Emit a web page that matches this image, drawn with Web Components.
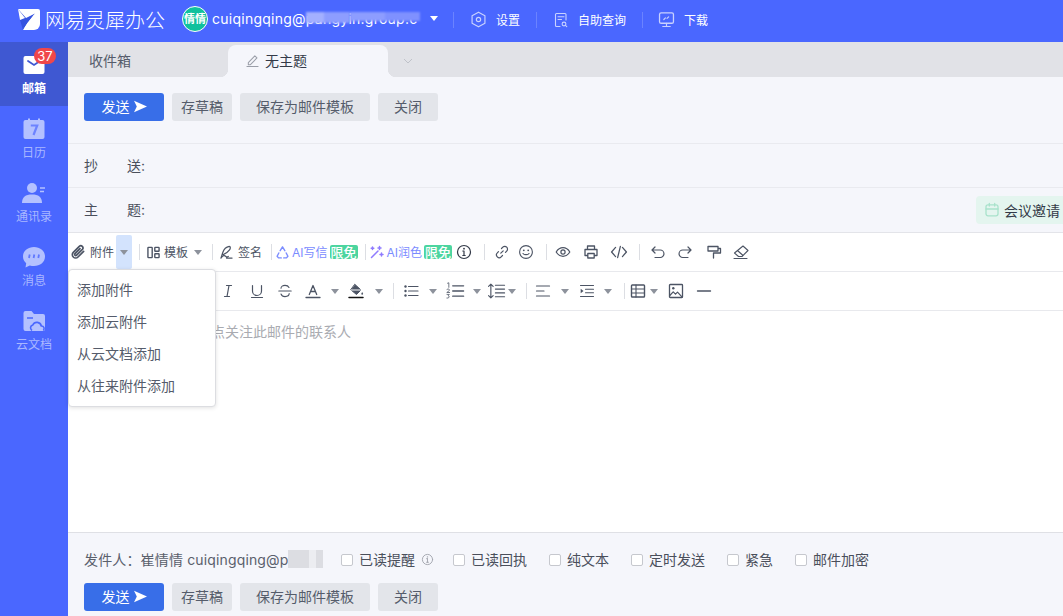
<!DOCTYPE html>
<html lang="zh">
<head>
<meta charset="utf-8">
<title>网易灵犀办公</title>
<style>
  html, body { margin: 0; height: 100%; overflow: hidden; }
  body { font-family: Inter, "Noto Sans CJK SC", sans-serif; font-size: 13px; color: #4c5464; }
</style>
</head>
<body>
<mail-app></mail-app>

<script>
// icon bodies, 16x16 box, stroke follows currentColor
const ICONS = {
  clip: '<path d="M13.6 7.4 8 13a3.3 3.3 0 0 1-4.7-4.7l6-6a2.2 2.2 0 0 1 3.1 3.1l-5.8 5.8a1.1 1.1 0 0 1-1.6-1.6l5-5" stroke-width="1.7"/>',
  layout: '<rect x="2" y="2.5" width="4.6" height="11" rx=".6" stroke-width="1.5"/><rect x="9.4" y="2.5" width="4.6" height="4.2" rx=".6" stroke-width="1.5"/><rect x="9.4" y="9.3" width="4.6" height="4.2" rx=".6" stroke-width="1.5"/>',
  sign: '<path d="M2 14 4 8c1-3 4-6 7-6.500 1.500 0 1.500 2 0 4-1.500 2-4 4-6.500 4.800M2 14c2-3 4-3 5-2s2 1 3 .2M8 14h6" stroke-width="1.300"/>',
  ai: '<path d="M8 2 5.500 6M8 2l2.500 4M4 8.500 2.200 12l1.500 1.800h3M12 8.500l1.800 3.500-1.500 1.800h-3" stroke-width="1.500"/>',
  wand: '<path d="M2.500 13.500 9 7M10.500 2.500v3M9 4h3M3.500 3v2.500M2.200 4.200h2.600M12.500 9v3M11 10.500h3" stroke-width="1.500"/>',
  info: '<circle cx="8" cy="8" r="6.500" stroke-width="1.200"/><path d="M8 7v4.500M6.800 11.500h2.400M6.800 7H8" stroke-width="1.200"/><circle cx="8" cy="4.700" r=".9" fill="currentColor" stroke="none"/>',
  link: '<path d="M6.800 9.200 9.200 6.800M7.500 4.500l1.300-1.300a2.700 2.700 0 0 1 3.900 3.900l-1.200 1.300M8.500 11.500l-1.300 1.300a2.700 2.700 0 0 1-3.900-3.900l1.200-1.300" stroke-width="1.200"/>',
  smile: '<circle cx="8" cy="8" r="6.400" stroke-width="1.100"/><path d="M5 9.500c.8 1.500 5.200 1.500 6 0" stroke-width="1.100"/><circle cx="5.800" cy="6.300" r=".9" fill="currentColor" stroke="none"/><circle cx="10.200" cy="6.300" r=".9" fill="currentColor" stroke="none"/>',
  eye: '<path d="M1.200 8C3 5 5.300 3.700 8 3.700S13 5 14.800 8C13 11 10.700 12.300 8 12.300S3 11 1.200 8Z" stroke-width="1.200"/><circle cx="8" cy="8" r="2.100" stroke-width="1.200"/>',
  print: '<path d="M4.500 5V2h7v3M4.500 11.500H2V5.500h12v6h-2.500" stroke-width="1.300"/><rect x="4.800" y="9.500" width="6.400" height="4.500" stroke-width="1.300"/>',
  code: '<path d="M5 4 1.500 8 5 12M11 4l3.500 4-3.500 4M9.200 3 6.800 13" stroke-width="1.100"/>',
  undo: '<path d="M2.500 6h7.700a3.500 3.500 0 0 1 0 7.500H5M5 3 2 6l3 3" stroke-width="1.200"/>',
  redo: '<path d="M13.500 6H5.800a3.500 3.500 0 0 0 0 7.500H11M11 3l3 3-3 3" stroke-width="1.200"/>',
  paint: '<path d="M2 2.500h10v4.500H2zM12 4.500h2.500V9H7.500v5" stroke-width="1.300"/>',
  eraser: '<path d="M10 2 15 6.500 9 12.500H5.500L1.500 9zM4.500 6.500l5 4.500M1 14.500h13" stroke-width="1.100"/>',
  italic: '<path d="M6.500 2.500h5M4.500 13.500h5M9 2.500l-2 11" stroke-width="1.200"/>',
  underline: '<path d="M3.500 2.500V8a4.500 4.500 0 0 0 9 0V2.500M2.500 14.500h11" stroke-width="1.200"/>',
  strike: '<path d="M12 4.500C11.300 3 9.800 2.400 8 2.400 5.800 2.400 4 3.400 4 5.300M4 11c.6 1.700 2.200 2.600 4 2.600 2.300 0 4.200-1 4.200-3M1.800 8h12.400" stroke-width="1.100"/>',
  fontcolor: '<path d="M4.300 11.500 8 2.500l3.700 9M5.500 8.500h5M1 14.500h14" stroke-width="1.300"/>',
  fill: '<path d="M7 1.500 13 7l-4.500 4.500L3 7z" fill="currentColor" stroke-width="1"/><path d="M3.500 7h9" stroke="#fff" stroke-width="1"/><path d="M14.200 9c.7 1 .9 1.500.9 1.800a.9.9 0 0 1-1.800 0c0-.3.200-.8.900-1.800Z" fill="currentColor" stroke="none"/><path d="M1 14.500h14" stroke="#111" stroke-width="1.500"/>',
  ul: '<path d="M5.500 3.500H15M5.500 8H15M5.500 12.500H15" stroke-width="1.200"/><circle cx="2.500" cy="3.500" r="1.200" fill="currentColor" stroke="none"/><circle cx="2.500" cy="8" r="1.200" fill="currentColor" stroke="none"/><circle cx="2.500" cy="12.500" r="1.200" fill="currentColor" stroke="none"/>',
  ol: '<path d="M6 3.500h9.500M6 8h9.500M6 12.500h9.500" stroke-width="1.200"/><path d="M1.500 1.200 2.600.8v4M.8 6.800c.3-.8 2.500-.8 2.300.5-.1.700-1.400 1.200-2.300 2h2.500M1 11h2l-1 1.200c1.300 0 1.500 2.300-1.100 2" stroke-width=".7"/>',
  lineheight: '<path d="M3.500 2v12M1.500 4l2-2 2 2M1.500 12l2 2 2-2M7.500 3h8M7.500 6.300h8M7.500 9.700h8M7.500 13h8" stroke-width="1"/>',
  align: '<path d="M1.500 3h13M1.500 8h7.500M1.500 13h13" stroke-width="1.200"/>',
  indent: '<path d="M1.500 2.500h13M6.500 6.300h8M6.500 9.700h8M1.500 13.500h13" stroke-width="1.100"/><path d="M1.700 5.800 4.500 8l-2.800 2.200z" fill="currentColor" stroke="none"/>',
  table: '<rect x="1.500" y="2" width="13" height="12" rx=".8" stroke-width="1.400"/><path d="M6 2v12M1.500 6h13M1.500 10h13" stroke-width="1.100"/>',
  image: '<rect x="1.500" y="1.500" width="13" height="13" rx=".8" stroke-width="1.300"/><circle cx="5.300" cy="5.300" r="1.200" fill="currentColor" stroke="none"/><path d="m1.800 12.500 3.400-3.700 2.300 2.400 2-2 4.700 5" stroke-width="1.200"/>',
  hr: '<path d="M1.500 8h13" stroke-width="1.400"/>',
  pencil: '<path d="M3.500 10.300 10.500 3l2.300 2.200-7 7.300H3.500zM2 14.500h12" stroke-width="1.100"/>',
  calendar: '<rect x="2" y="2.800" width="12" height="11" rx="2" stroke-width="1.300"/><path d="M2 7h12M5.300 1.500v2.500M10.700 1.500v2.500" stroke-width="1.300"/>',
  hexagon: '<path d="M8 1.200 14 4.600v6.800l-6 3.400-6-3.400V4.600z" stroke-width="1.100"/><circle cx="8" cy="8" r="2" stroke-width="1.100"/>',
  report: '<path d="M7 14.500H3.500a1 1 0 0 1-1-1v-11a1 1 0 0 1 1-1h8.500a1 1 0 0 1 1 1V8" stroke-width="1.100"/><path d="M5 4.800h6M5 7.500h3.500" stroke-width="1.100"/><circle cx="11" cy="12" r="1.900" stroke-width="1.100"/><path d="m12.400 13.400 1.400 1.300" stroke-width="1.100"/>',
  monitor: '<rect x="1.500" y="1.800" width="13" height="9.700" rx="1.500" stroke-width="1.200"/><path d="M8 11.500v3M4.500 14.500h7M5.500 8l1.500-1.500M8.500 7l1.500-1.500" stroke-width="1.100"/>'
};

class BaseElement extends HTMLElement {
  constructor() {
    super();
    this.attachShadow({ mode: 'open' });
  }
  connectedCallback() {
    const template = document.createElement('template');
    template.innerHTML = `<style>${this.getStyles()}</style>${this.getTemplate()}`;
    this.shadowRoot.appendChild(template.content.cloneNode(true));
  }
}

class MailIcon extends BaseElement {
  getStyles() {
    const size = this.getAttribute('size') || 14;
    return `:host { display: block; flex: none; width: ${size}px; height: ${size}px; }
      svg { display: block; width: 100%; height: 100%; overflow: visible; }`;
  }
  getTemplate() {
    return `<svg viewBox="1 1 14 14" fill="none" stroke="currentColor" stroke-linecap="round" stroke-linejoin="round">${ICONS[this.getAttribute('name')]}</svg>`;
  }
}

class ToolCaret extends BaseElement {
  getStyles() {
    return `:host { display: flex; flex: none; width: 10px; justify-content: center; }
      i { display: block; border: 4px solid transparent; border-top: 5px solid #8d929c; border-bottom: 0; }`;
  }
  getTemplate() { return '<i></i>'; }
}

class ToolSep extends BaseElement {
  getStyles() { return ':host { display: block; flex: none; width: 1px; height: 16px; background: #dcdee3; }'; }
  getTemplate() { return ''; }
}

class FreeTag extends BaseElement {
  getStyles() {
    return `:host { display: block; flex: none; width: 28px; height: 14px; line-height: 14px; background: #4cd59f; color: #fff; font-size: 13px; font-weight: 500; text-align: center; border-radius: 2px; overflow: hidden; }`;
  }
  getTemplate() { return '<slot></slot>'; }
}

class MailButton extends BaseElement {
  getStyles() {
    return `:host { display: flex; align-items: center; justify-content: center; height: 28px; padding-bottom: 2px; border-radius: 3px; background: #e3e5ea; color: #555c6b; font-size: 14px; box-sizing: border-box; }
      :host([primary]) { background: #386ee8; color: #fff; }
      svg { width: 13px; height: 13px; margin-left: 4px; }`;
  }
  getTemplate() {
    const arrow = this.hasAttribute('primary')
      ? '<svg viewBox="0 0 13 13"><path d="M0 .8 13 6.500 0 12.200 2.800 6.500Z" fill="#fff"/></svg>' : '';
    return `<slot></slot>${arrow}`;
  }
}

class ActionBar extends BaseElement {
  getStyles() { return ':host { display: flex; gap: 8px; }'; }
  getTemplate() {
    return `<mail-button primary style="width:80px">发送</mail-button>
      <mail-button style="width:60px">存草稿</mail-button>
      <mail-button style="width:130px">保存为邮件模板</mail-button>
      <mail-button style="width:60px">关闭</mail-button>`;
  }
}

class TopBar extends BaseElement {
  getStyles() {
    return `:host { display: flex; align-items: center; height: 42px; background: #4a67ff; color: #fff; flex: none; }
      .logo { width: 24px; height: 23px; margin: -3px 0 0 17px; flex: none; }
      .brand { margin: -3px 0 0 4px; font-size: 20px; font-weight: 300; width: 121px; white-space: nowrap; }
      .avatar { box-sizing: border-box; width: 26px; height: 26px; margin: -4px 0 0 16px; border-radius: 50%; border: 1px solid #fff; background: #10c19d; font-size: 11px; font-weight: 700; line-height: 24px; text-align: center; flex: none; white-space: nowrap; overflow: hidden; }
      .mail { position: relative; margin: -4px 0 0 4px; width: 211px; font-size: 14px; letter-spacing: .25px; white-space: nowrap; line-height: 20px; flex: none; }
      .blur { position: absolute; top: 3px; filter: blur(1px); }
      .b1 { left: 94px; width: 44px; height: 11px; background: linear-gradient(90deg, #a3b0ff 0 40%, #8d9dff 40%); }
      .b2 { left: 138px; width: 70px; height: 9px; background: linear-gradient(90deg, #8d9dff 0 50%, #7f91ff 50%); }
      .down { margin: -5px 0 0 7px; border: 4.500px solid transparent; border-top: 5px solid #fff; border-bottom: 0; flex: none; }
      .sep { width: 1px; height: 16px; margin-top: -3px; background: #6b83ff; flex: none; }
      .item { display: flex; align-items: center; margin-top: -3px; font-size: 12px; flex: none; }
      .item mail-icon { color: #c9d2ff; margin-right: 10px; }
      `;
  }
  getTemplate() {
    return `<svg class="logo" viewBox="0 0 24 23"><path d="M1 1h20a2 2 0 0 1 2 2v13a6 6 0 0 1-6 6H8z" fill="#fff"/><path d="M1 1 9 10l9-4.500L10.500 15 6 22 3 12z" fill="#3553e0"/><path d="M3 12 1 1l7 9z" fill="#fff"/><path d="M6 22l4.500-7L18 5.500 13 22z" fill="#fff"/></svg>
      <div class="brand">网易灵犀办公</div>
      <div class="avatar">情情</div>
      <div class="mail">cuiqingqing@pangyin.group.c<div class="blur b1"></div><div class="blur b2"></div></div>
      <i class="down"></i>
      <div class="sep" style="margin-left:15px"></div>
      <div class="item" style="margin-left:17px"><mail-icon name="hexagon" size="15"></mail-icon>设置</div>
      <div class="sep" style="margin-left:16px"></div>
      <div class="item" style="margin-left:17px"><mail-icon name="report" size="14"></mail-icon>自助查询</div>
      <div class="sep" style="margin-left:16px"></div>
      <div class="item" style="margin-left:16px"><mail-icon name="monitor" size="15"></mail-icon>下载</div>`;
  }
}

class NavItem extends BaseElement {
  getStyles() {
    return `:host { display: flex; flex-direction: column; align-items: center; height: 64px; box-sizing: border-box; padding-top: 12px; position: relative; color: #a9b7ff; font-size: 12px; line-height: 17px; }
      :host([active]) { background: #3f58d2; color: #fff; font-weight: 700; }
      .ico { width: 24px; height: 22px; margin-bottom: 4px; }
      ::slotted(svg) { display: block; width: 24px; height: 22px; }
      .badge { position: absolute; left: 34px; top: 6px; min-width: 22px; height: 16px; line-height: 16px; border-radius: 8px; background: #f0474a; color: #fff; font-size: 13px; font-weight: 400; text-align: center; }`;
  }
  getTemplate() {
    const badge = this.getAttribute('badge');
    return `<div class="ico"><slot name="icon"></slot></div><slot></slot>${badge ? `<div class="badge">${badge}</div>` : ''}`;
  }
}

class SideBar extends BaseElement {
  getStyles() { return ':host { display: block; width: 68px; flex: none; background: #4a67ff; }'; }
  getTemplate() {
    return `<nav-item active badge="37"><svg slot="icon" viewBox="0 0 24 22"><rect x="1.500" y="2" width="21" height="18" rx="2" fill="#fff"/><path d="M6 7l6 4 6-4" fill="none" stroke="#3f58d2" stroke-width="1.800" stroke-linecap="round"/></svg>邮箱</nav-item>
      <nav-item><svg slot="icon" viewBox="0 0 24 22"><rect x="1.500" y="2" width="21" height="19" rx="2" fill="#b4c1ff"/><path d="M7 .5v3M17 .5v3" stroke="#b4c1ff" stroke-width="2"/><path d="M8.800 7.500h6.400L11.500 17" fill="none" stroke="#6d83ff" stroke-width="2.200"/></svg>日历</nav-item>
      <nav-item><svg slot="icon" viewBox="0 0 24 22"><circle cx="10" cy="6" r="5" fill="#b4c1ff"/><path d="M0 21c0-6 3.500-8.500 10-8.500S20 15 20 21z" fill="#b4c1ff"/><path d="M18 6h5M18 9.500h4" stroke="#b4c1ff" stroke-width="1.500"/></svg>通讯录</nav-item>
      <nav-item><svg slot="icon" viewBox="0 0 24 22"><path d="M12 1c6 0 11 3.800 11 9.500S18 20 12 20c-1.500 0-3-.2-4.200-.6L3.500 21.500l.7-4.200C2.200 15.500 1 13.200 1 10.500 1 4.800 6 1 12 1Z" fill="#b4c1ff"/><path d="M7.700 8.500 7 12M12.300 8.500l-.7 3.500M17 8.500l-.7 3.500" stroke="#6078ff" stroke-width="1.800"/></svg>消息</nav-item>
      <nav-item><svg slot="icon" viewBox="0 0 24 22"><path d="M1.500 3a2 2 0 0 1 2-2h6l2.500 3h9a2 2 0 0 1 2 2v13a2 2 0 0 1-2 2h-17.500a2 2 0 0 1-2-2z" fill="#b4c1ff"/><path d="M5 8h6" stroke="#4a67ff" stroke-width="1.500"/><path d="M10 20.500a3 3 0 0 1 .8-5.500 4.500 4.500 0 0 1 8.500 1 2.600 2.600 0 0 1 2 4.500" fill="none" stroke="#4a67ff" stroke-width="1.600"/></svg>云文档</nav-item>`;
  }
}

class TabStrip extends BaseElement {
  getStyles() {
    return `:host { display: flex; align-items: flex-end; height: 35px; flex: none; background: #e1e2e7; font-size: 14px; box-sizing: border-box; }
      .tab { display: flex; align-items: center; height: 32px; box-sizing: border-box; padding-bottom: 2px; }
      .inbox { width: 160px; padding-left: 21px; color: #555c6b; }
      .active { position: relative; width: 160px; padding-left: 18px; background: #f5f6fb; border-radius: 8px 8px 0 0; color: #333a48; }
      .active::before, .active::after { content: ""; position: absolute; bottom: 0; width: 8px; height: 8px; }
      .active::before { left: -8px; background: radial-gradient(circle at 0 0, transparent 8px, #f5f6fb 8.500px); }
      .active::after { right: -8px; background: radial-gradient(circle at 100% 0, transparent 8px, #f5f6fb 8.500px); }
      .active mail-icon { color: #9a9ea8; margin-right: 6px; }
      svg { width: 10px; height: 6px; margin: 0 0 13px 15px; }`;
  }
  getTemplate() {
    return `<div class="tab inbox">收件箱</div>
      <div class="tab active"><mail-icon name="pencil" size="13"></mail-icon>无主题</div>
      <svg viewBox="0 0 10 6"><path d="M1 1l4 4 4-4" fill="none" stroke="#bfc2c9" stroke-width="1"/></svg>`;
  }
}

class FieldRow extends BaseElement {
  getStyles() {
    return `:host { display: flex; align-items: center; height: 44px; box-sizing: border-box; padding-left: 16px; border-bottom: 1px solid #e9eaef; color: #4a4f5b; font-size: 14px; }
      .label { display: flex; justify-content: space-between; width: 61px; margin-bottom: var(--lift, 2px); }
      ::slotted(*) { margin-left: auto; }`;
  }
  getTemplate() {
    const [a, b] = this.getAttribute('label');
    return `<div class="label"><span>${a}</span><span>${b}:</span></div><slot></slot>`;
  }
}

class MeetingLink extends BaseElement {
  getStyles() {
    return `:host { display: flex; align-items: center; width: 87px; height: 28px; box-sizing: border-box; padding: 0 0 1px 9px; border-radius: 4px 0 0 4px; background: #e4f5ef; color: #333a48; font-size: 14px; white-space: nowrap; overflow: hidden; }
      mail-icon { color: #a8e2cb; margin-right: 5px; }`;
  }
  getTemplate() { return '<mail-icon name="calendar" size="14"></mail-icon><slot></slot>'; }
}

class EditorToolbar extends BaseElement {
  getStyles() {
    return `:host { display: flex; align-items: center; height: 39px; box-sizing: border-box; border-bottom: 1px solid #e8e9ed; background: #fff; color: #4c5464; font-size: 12px; white-space: nowrap; }
      ::slotted(span) { margin-bottom: 2px; }
      ::slotted(.ai) { color: #7b8cff; }`;
  }
  getTemplate() { return '<slot></slot>'; }
}

class AttachCaret extends BaseElement {
  getStyles() {
    return `:host { display: flex; align-items: center; justify-content: center; width: 16px; height: 34px; flex: none; background: #d3e3fd; border-radius: 2px; }`;
  }
  getTemplate() { return '<tool-caret></tool-caret>'; }
}

class DropMenu extends BaseElement {
  getStyles() {
    return `:host { position: absolute; left: 0; top: 36px; width: 148px; box-sizing: border-box; height: 138px; padding: 4px 0; background: #fff; border: 1px solid #dcdde1; border-radius: 4px; box-shadow: 0 1px 4px rgba(0,0,0,.12); color: #555c6b; font-size: 14px; z-index: 5; }
      div { height: 32px; line-height: 32px; padding-left: 8px; }`;
  }
  getTemplate() {
    return ['添加附件', '添加云附件', '从云文档添加', '从往来附件添加'].map(t => `<div>${t}</div>`).join('');
  }
}

class CheckOption extends BaseElement {
  getStyles() {
    return `:host { display: flex; align-items: center; flex: none; color: #4a4f5b; font-size: 14px; }
      i { display: block; box-sizing: border-box; width: 12px; height: 12px; margin: 2px 6px 0 0; border: 1px solid #c6c8ce; border-radius: 2px; background: #fff; }`;
  }
  getTemplate() { return '<i></i><slot></slot>'; }
}

class SendFooter extends BaseElement {
  getStyles() {
    return `:host { display: flex; flex-direction: column; flex: none; height: 84px; box-sizing: border-box; padding: 15px 0 0 16px; background: #f5f6fb; border-top: 1px solid #dfe0e5; }
      .line { display: flex; align-items: center; height: 22px; margin-bottom: 13px; font-size: 14px; color: #5a606c; }
      .from { position: relative; width: 257px; flex: none; white-space: nowrap; letter-spacing: .15px; }
      .blur { position: absolute; left: 204px; top: 1px; width: 35px; height: 18px; background: linear-gradient(90deg, #dcdde2 0 60%, #ecedf1 60% 80%, #dcdde2 80%); filter: blur(.6px); }
      .tip { color: #a3a6ae; margin: 1px 20px 0 7px; }
      check-option { margin-right: 22px; }`;
  }
  getTemplate() {
    return `<div class="line">
        <div class="from">发件人：崔情情 cuiqingqing@p<span class="blur"></span></div>
        <check-option style="margin-right:0">已读提醒</check-option><mail-icon class="tip" name="info" size="11"></mail-icon>
        <check-option>已读回执</check-option>
        <check-option>纯文本</check-option>
        <check-option>定时发送</check-option>
        <check-option>紧急</check-option>
        <check-option>邮件加密</check-option>
      </div>
      <action-bar></action-bar>`;
  }
}

class ComposeView extends BaseElement {
  getStyles() {
    return `:host { display: flex; flex-direction: column; flex: 1; min-width: 0; background: #f5f6fb; }
      .head { flex: none; padding: 16px 0 22px 16px; height: 67px; box-sizing: border-box; border-bottom: 1px solid #e9eaef; }
      .editor { position: relative; flex: 1; display: flex; flex-direction: column; background: #fff; border-top: 1px solid #e3e4e9; margin-top: 0; }
      .hint { padding: 12px 0 0 143px; color: #a9abb1; font-size: 14px; line-height: 18px; white-space: nowrap; }`;
  }
  getTemplate() {
    return `<tab-strip></tab-strip>
      <div class="head"><action-bar></action-bar></div>
      <field-row label="抄送"></field-row>
      <field-row label="主题" style="border-bottom:0;--lift:3px"><meeting-link>会议邀请</meeting-link></field-row>
      <div class="editor">
        <editor-toolbar>
          <mail-icon name="clip" style="margin-left:3px"></mail-icon><span style="margin-left:5px">附件</span>
          <attach-caret style="margin-left:2px"></attach-caret>
          <tool-sep style="margin-left:7px"></tool-sep>
          <mail-icon name="layout" size="13" style="margin-left:7px"></mail-icon><span style="margin-left:4px">模板</span>
          <tool-caret style="margin-left:5px"></tool-caret>
          <tool-sep style="margin-left:9px"></tool-sep>
          <mail-icon name="sign" size="13" style="margin-left:7px"></mail-icon><span style="margin-left:5px">签名</span>
          <tool-sep style="margin-left:9px"></tool-sep>
          <mail-icon name="ai" size="13" style="margin-left:4px;color:#7b8cff"></mail-icon><span class="ai" style="margin-left:3px">AI写信</span>
          <free-tag style="margin-left:2px">限免</free-tag>
          <tool-sep style="margin-left:7px"></tool-sep>
          <mail-icon name="wand" style="margin-left:4px;color:#8f7bff"></mail-icon><span class="ai" style="margin-left:3px">AI润色</span>
          <free-tag style="margin-left:2px">限免</free-tag>
          <mail-icon name="info" style="margin-left:5px;color:#333a48"></mail-icon>
          <tool-sep style="margin-left:13px"></tool-sep>
          <mail-icon name="link" style="margin-left:10px"></mail-icon>
          <mail-icon name="smile" style="margin-left:10px"></mail-icon>
          <tool-sep style="margin-left:13px"></tool-sep>
          <mail-icon name="eye" style="margin-left:9px"></mail-icon>
          <mail-icon name="print" style="margin-left:14px"></mail-icon>
          <mail-icon name="code" size="16" style="margin-left:13px"></mail-icon>
          <tool-sep style="margin-left:12px"></tool-sep>
          <mail-icon name="undo" style="margin-left:11px"></mail-icon>
          <mail-icon name="redo" style="margin-left:13px"></mail-icon>
          <mail-icon name="paint" style="margin-left:15px"></mail-icon>
          <mail-icon name="eraser" style="margin-left:13px"></mail-icon>
        </editor-toolbar>
        <editor-toolbar>
          <mail-icon name="italic" style="margin-left:153px"></mail-icon>
          <mail-icon name="underline" style="margin-left:15px"></mail-icon>
          <mail-icon name="strike" style="margin-left:14px"></mail-icon>
          <mail-icon name="fontcolor" style="margin-left:14px"></mail-icon>
          <tool-caret style="margin-left:10px"></tool-caret>
          <mail-icon name="fill" style="margin-left:9px"></mail-icon>
          <tool-caret style="margin-left:11px"></tool-caret>
          <tool-sep style="margin-left:9px"></tool-sep>
          <mail-icon name="ul" style="margin-left:10px"></mail-icon>
          <tool-caret style="margin-left:10px"></tool-caret>
          <mail-icon name="ol" size="16" style="margin-left:9px"></mail-icon>
          <tool-caret style="margin-left:9px"></tool-caret>
          <mail-icon name="lineheight" size="16" style="margin-left:6px"></mail-icon>
          <tool-caret style="margin-left:3px"></tool-caret>
          <tool-sep style="margin-left:9px"></tool-sep>
          <mail-icon name="align" style="margin-left:9px"></mail-icon>
          <tool-caret style="margin-left:10px"></tool-caret>
          <mail-icon name="indent" style="margin-left:10px"></mail-icon>
          <tool-caret style="margin-left:9px"></tool-caret>
          <tool-sep style="margin-left:11px"></tool-sep>
          <mail-icon name="table" style="margin-left:6px"></mail-icon>
          <tool-caret style="margin-left:4px"></tool-caret>
          <mail-icon name="image" style="margin-left:10px"></mail-icon>
          <mail-icon name="hr" style="margin-left:14px"></mail-icon>
        </editor-toolbar>
        <div class="hint">点关注此邮件的联系人</div>
        <drop-menu></drop-menu>
      </div>
      <send-footer></send-footer>`;
  }
}

class MailApp extends BaseElement {
  getStyles() {
    return `:host { display: flex; flex-direction: column; width: 100vw; height: 100vh; overflow: hidden; }
      .main { display: flex; flex: 1; min-height: 0; }`;
  }
  getTemplate() {
    return '<top-bar></top-bar><div class="main"><side-bar></side-bar><compose-view></compose-view></div>';
  }
}

customElements.define('mail-icon', MailIcon);
customElements.define('tool-caret', ToolCaret);
customElements.define('tool-sep', ToolSep);
customElements.define('free-tag', FreeTag);
customElements.define('mail-button', MailButton);
customElements.define('action-bar', ActionBar);
customElements.define('top-bar', TopBar);
customElements.define('nav-item', NavItem);
customElements.define('side-bar', SideBar);
customElements.define('tab-strip', TabStrip);
customElements.define('field-row', FieldRow);
customElements.define('meeting-link', MeetingLink);
customElements.define('editor-toolbar', EditorToolbar);
customElements.define('attach-caret', AttachCaret);
customElements.define('drop-menu', DropMenu);
customElements.define('check-option', CheckOption);
customElements.define('send-footer', SendFooter);
customElements.define('compose-view', ComposeView);
customElements.define('mail-app', MailApp);
</script>
</body>
</html>
